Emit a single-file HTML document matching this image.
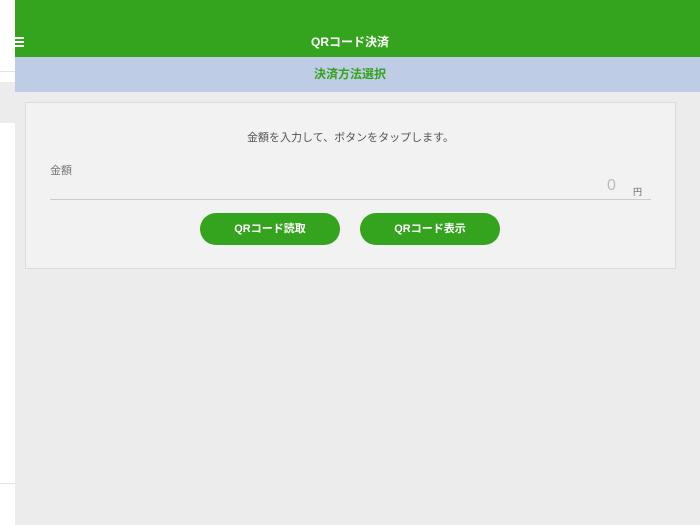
<!DOCTYPE html>
<html><head><meta charset="utf-8"><style>
*{margin:0;padding:0;box-sizing:border-box}
body{width:700px;height:525px;overflow:hidden;background:#ececec;font-family:"Liberation Sans","Noto Sans CJK JP",sans-serif;position:relative}
.side{position:absolute;left:0;top:0;width:15px;height:525px;background:#fff}
.side .l1{position:absolute;top:71px;left:0;width:15px;height:1px;background:#e2e2e2}
.side .g{position:absolute;top:82px;left:0;width:15px;height:41px;background:#ececec}
.side .l2{position:absolute;top:483px;left:0;width:15px;height:1px;background:#e2e2e2}
.hdr{position:absolute;left:15px;top:0;width:685px;height:57px;background:#34a31d}
.ham{position:absolute;left:15px;top:37px;width:9px;height:11px}
.ham i{display:block;height:2px;background:#fff;margin-bottom:2px}
.title{position:absolute;left:0;width:700px;top:33px;text-align:center;color:#fff;font-size:12px;font-weight:bold}
.sub{position:absolute;left:0;top:57px;width:700px;height:35px;color:#34a31d;font-size:12px;font-weight:bold;text-align:center;line-height:35px}
.subbg{position:absolute;left:15px;top:57px;width:685px;height:35px;background:#bfcce5}
.card{position:absolute;left:25px;top:102px;width:651px;height:167px;background:#f2f2f2;border:1px solid #dcdcdc}
.msg{position:absolute;top:26px;left:0;width:100%;text-align:center;font-size:11px;color:#555}
.lab{position:absolute;left:24px;top:59px;font-size:11px;color:#777}
.zero{position:absolute;left:581px;top:74px;font-size:16px;color:#bbb}
.yen{position:absolute;left:607px;top:82px;font-size:9px;color:#666}
.line{position:absolute;left:24px;top:96px;width:601px;height:1px;background:#ccc}
.btn{position:absolute;top:110px;width:140px;height:32px;border-radius:16px;background:#34a31d;color:#fff;font-size:11px;font-weight:bold;text-align:center;line-height:32px}
</style></head><body>
<div class="side"><div class="l1"></div><div class="g"></div><div class="l2"></div></div>
<div class="hdr"></div>
<div class="ham"><i></i><i></i><i></i></div>
<div class="title">QRコード決済</div>
<div class="subbg"></div>
<div class="sub">決済方法選択</div>
<div class="card">
<div class="msg">金額を入力して、ボタンをタップします。</div>
<div class="lab">金額</div>
<div class="zero">0</div>
<div class="yen">円</div>
<div class="line"></div>
<div class="btn" style="left:174px">QRコード読取</div>
<div class="btn" style="left:334px">QRコード表示</div>
</div>
</body></html>
